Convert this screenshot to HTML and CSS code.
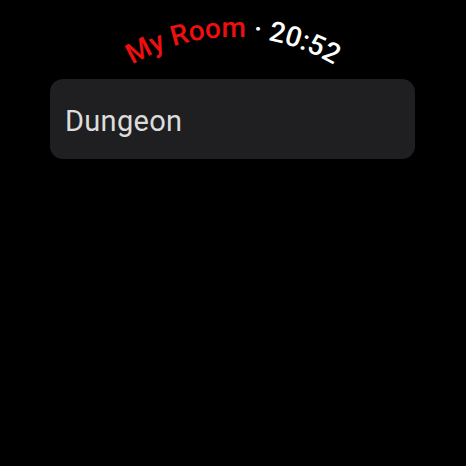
FILE: index.html
```html
<!DOCTYPE html>
<html>
<head>
<meta charset="utf-8">
<link rel="stylesheet" href="styles.css">
</head>
<body>
<div class="screen">
  <svg class="curved" width="466" height="466" viewBox="0 0 466 466">
    <defs>
      <path id="arc" d="M 37 233 A 196 196 0 1 1 429 233"/>
    </defs>
    <text class="arc-text">
      <textPath href="#arc" startOffset="50%" text-anchor="middle"><tspan class="room">My Room</tspan><tspan class="sep"> · </tspan><tspan class="time">20:52</tspan></textPath>
    </text>
  </svg>
  <div class="list">
    <div class="card"><span class="label">Dungeon</span></div>
  </div>
</div>
</body>
</html>
```
FILE: styles.css
```css
html, body {
  margin: 0;
  padding: 0;
  background: #000;
}
.screen {
  position: relative;
  width: 466px;
  height: 466px;
  background: #000;
  overflow: hidden;
  font-family: Roboto, "Noto Sans", sans-serif;
}
.curved {
  position: absolute;
  left: 0;
  top: 0;
}
.arc-text {
  font-family: Roboto, sans-serif;
  font-size: 28px;
  font-weight: 500;
}
.room { fill: #ee0f0f; }
.sep { fill: #ffffff; }
.time { fill: #ffffff; }
.list {
  padding: 79px 51px 0 50px;
}
.card {
  height: 80px;
  border-radius: 13px;
  background: #1f1f21;
  display: flex;
  align-items: center;
  padding-left: 15px;
}
.label {
  color: #dcdcdc;
  font-size: 29px;
  letter-spacing: 0.3px;
  padding-top: 4px;
}
```
